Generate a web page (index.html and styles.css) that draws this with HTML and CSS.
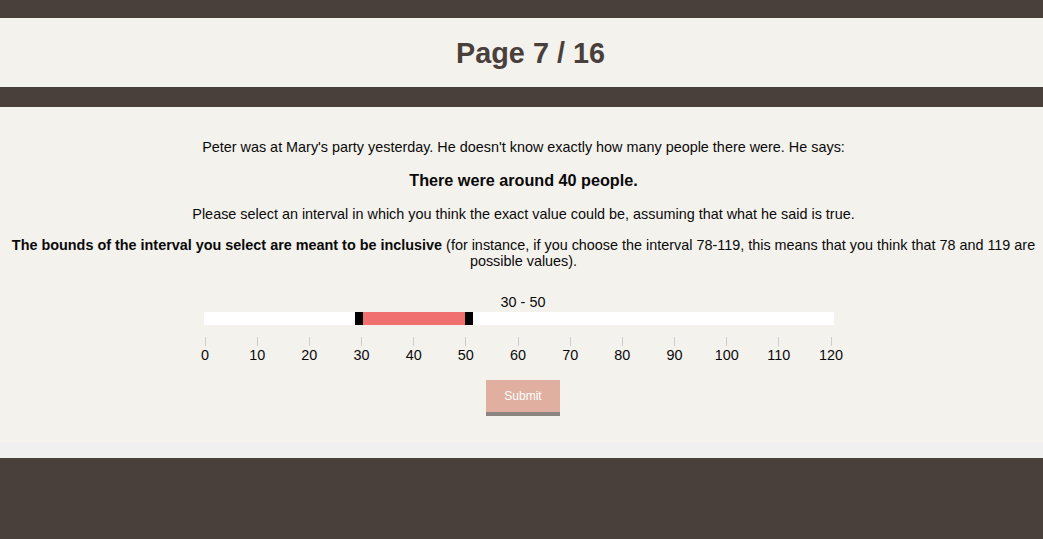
FILE: index.html
```html
<!DOCTYPE html>
<html>
<head>
<meta charset="utf-8">
<link rel="stylesheet" href="styles.css">
</head>
<body>
<div class="topbar"></div>
<header class="header"><h1 class="title">Page 7 / 16</h1></header>
<div class="midbar"></div>
<main class="content">
  <p class="intro">Peter was at Mary's party yesterday. He doesn't know exactly how many people there were. He says:</p>
  <p class="quote">There were around 40 people.</p>
  <p class="instr">Please select an interval in which you think the exact value could be, assuming that what he said is true.</p>
  <p class="note"><b>The bounds of the interval you select are meant to be inclusive</b> (for instance, if you choose the interval 78-119, this means that you think that 78 and 119 are possible values).</p>
  <div class="slider-wrap">
    <div class="slider">
      <div class="range-label">30 - 50</div>
      <div class="track">
        <div class="fill" style="left:159px;width:102px"></div>
        <div class="handle" style="left:151px"></div>
        <div class="handle" style="left:261px"></div>
      </div>
      <div class="scale">
        <div class="tick" style="left:1px"><span class="mark"></span><span class="num">0</span></div>
        <div class="tick" style="left:53.17px"><span class="mark"></span><span class="num">10</span></div>
        <div class="tick" style="left:105.33px"><span class="mark"></span><span class="num">20</span></div>
        <div class="tick" style="left:157.5px"><span class="mark"></span><span class="num">30</span></div>
        <div class="tick" style="left:209.67px"><span class="mark"></span><span class="num">40</span></div>
        <div class="tick" style="left:261.83px"><span class="mark"></span><span class="num">50</span></div>
        <div class="tick" style="left:314px"><span class="mark"></span><span class="num">60</span></div>
        <div class="tick" style="left:366.17px"><span class="mark"></span><span class="num">70</span></div>
        <div class="tick" style="left:418.33px"><span class="mark"></span><span class="num">80</span></div>
        <div class="tick" style="left:470.5px"><span class="mark"></span><span class="num">90</span></div>
        <div class="tick" style="left:522.67px"><span class="mark"></span><span class="num">100</span></div>
        <div class="tick" style="left:574.83px"><span class="mark"></span><span class="num">110</span></div>
        <div class="tick" style="left:627px"><span class="mark"></span><span class="num">120</span></div>
      </div>
    </div>
  </div>
  <div class="actions"><button class="submit">Submit</button></div>
</main>
<div class="strip"></div>
<footer class="footer"></footer>
</body>
</html>
```

FILE: styles.css
```css
html, body {
  margin: 0;
  padding: 0;
}
body {
  background: #4a403b;
  font-family: "Liberation Sans", Arial, sans-serif;
  color: #0a0a0a;
}
.topbar {
  height: 18px;
  background: #4a403b;
}
.header {
  height: 69px;
  background: #f4f2ed;
  display: flex;
  align-items: center;
  justify-content: center;
}
.title {
  margin: 0;
  font-size: 28.8px;
  font-weight: bold;
  color: #4a403b;
  line-height: 32px;
  padding-left: 18px;
}
.midbar {
  height: 20px;
  background: #4a403b;
}
.content {
  background: #f4f2ed;
  padding: 32px 7px 0 11px;
  height: 304px;
  text-align: center;
}
.content p {
  margin: 0;
}
.intro {
  font-size: 14.4px;
  line-height: 16px;
}
.quote {
  margin-top: 17px !important;
  font-size: 16.2px;
  font-weight: bold;
  line-height: 17px;
}
.instr {
  margin-top: 17px !important;
  font-size: 14.4px;
  line-height: 16px;
}
.note {
  margin-top: 15px !important;
  font-size: 14.4px;
  line-height: 16px;
}
.slider-wrap {
  display: flex;
  justify-content: center;
  padding-right: 9px;
  margin-top: 25px;
}
.slider {
  width: 630px;
}
.range-label {
  font-size: 14.4px;
  line-height: 16px;
  height: 18px;
  padding-left: 8px;
}
.track {
  position: relative;
  height: 13px;
  background: #fff;
}
.fill {
  position: absolute;
  top: 0;
  height: 13px;
  background: #f07070;
}
.handle {
  position: absolute;
  top: 0;
  width: 8px;
  height: 13px;
  background: #000;
}
.scale {
  position: relative;
  height: 55px;
}
.tick {
  position: absolute;
  top: 12px;
  width: 0;
  display: flex;
  flex-direction: column;
  align-items: center;
}
.mark {
  width: 1px;
  height: 9px;
  background: #ccc;
}
.num {
  font-size: 14.4px;
  line-height: 16px;
  margin-top: 1px;
  white-space: nowrap;
}
.actions {
  display: flex;
  justify-content: center;
  padding-right: 1px;
}
.submit {
  width: 74px;
  height: 36px;
  background: #e1afa0;
  border: none;
  border-bottom: 4px solid #8a8580;
  color: #fff;
  font-family: "Liberation Sans", Arial, sans-serif;
  font-size: 12px;
  padding: 0;
  cursor: pointer;
}
.strip {
  height: 15px;
  background: #f0f0f0;
}
.footer {
  height: 81px;
  background: #4a403b;
}
```
